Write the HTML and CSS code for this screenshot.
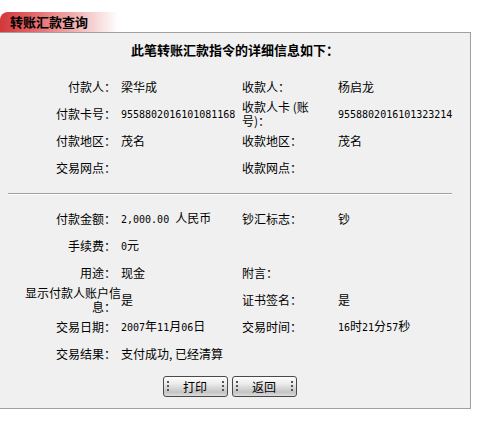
FILE: index.html
```
<!DOCTYPE html>
<html lang="zh-CN">
  <head>
    <meta charset="UTF-8" />
    <title>转账汇款查询</title>
    <link rel="stylesheet" href="styles.css">
  </head>
  <body>
    <div class="tab">转账汇款查询</div>

    <div class="panel">
      <h3 class="title">此笔转账汇款指令的详细信息如下：</h3>

      <div class="info">
        <div class="lbl">付款人：</div>
        <div class="val">梁华成</div>
        <div class="lbl2">收款人：</div>
        <div class="val">杨启龙</div>

        <div class="lbl">付款卡号：</div>
        <div class="val"><span class="num">9558802016101081168</span></div>
        <div class="lbl2">收款人卡 (账<br />号)：</div>
        <div class="val"><span class="num">9558802016101323214</span></div>

        <div class="lbl">付款地区：</div>
        <div class="val">茂名</div>
        <div class="lbl2">收款地区：</div>
        <div class="val">茂名</div>

        <div class="lbl">交易网点：</div>
        <div class="val"></div>
        <div class="lbl2">收款网点：</div>
        <div class="val"></div>
      </div>

      <hr class="sep" />

      <div class="info">
        <div class="lbl">付款金额：</div>
        <div class="val"><span class="num">2,000.00 </span>人民币</div>
        <div class="lbl2">钞汇标志：</div>
        <div class="val">钞</div>

        <div class="lbl">手续费：</div>
        <div class="val"><span class="num">0</span>元</div>
        <div class="lbl2"></div>
        <div class="val"></div>

        <div class="lbl">用途：</div>
        <div class="val">现金</div>
        <div class="lbl2">附言：</div>
        <div class="val"></div>

        <div class="lbl">显示付款人账户信<br />息：</div>
        <div class="val">是</div>
        <div class="lbl2">证书签名：</div>
        <div class="val">是</div>

        <div class="lbl">交易日期：</div>
        <div class="val"><span class="num">2007</span>年<span class="num">11</span>月<span class="num">06</span>日</div>
        <div class="lbl2">交易时间：</div>
        <div class="val"><span class="num">16</span>时<span class="num">21</span>分<span class="num">57</span>秒</div>

        <div class="lbl">交易结果：</div>
        <div class="val wide">支付成功, 已经清算</div>
      </div>

      <div class="btns">
        <button class="btn" onclick="window.print()">打印</button>
        <button class="btn" onclick="history.back()">返回</button>
      </div>
    </div>
  </body>
</html>
```

FILE: styles.css
```
body {
  margin: 0;
  background-color: #ffffff;
  font-family: "Noto Sans CJK SC", sans-serif;
  font-size: 12px;
  line-height: 14px;
  color: #000;
}
.tab {
  margin-top: 12px;
  width: 108px;
  height: 20px;
  line-height: 20px;
  padding-left: 10px;
  font-size: 13px;
  font-weight: bold;
  border-top-left-radius: 8px;
  background: linear-gradient(to right, #d2363a 0%, #e46a6c 30%, #f2b4b4 65%, #ffffff 100%);
}
.panel {
  width: 470px;
  background-color: #f0f0f0;
  border-top: 1px solid #a0a0a0;
  border-right: 1px solid #a0a0a0;
  border-bottom: 1px solid #a0a0a0;
  padding: 9px 0 11px 0;
}
.title {
  margin: 0 0 15px 0;
  text-align: center;
  font-size: 13px;
  line-height: 16px;
  font-weight: bold;
}
.info {
  display: grid;
  grid-template-columns: 96px 121px 96px 1fr;
  grid-auto-rows: 27px;
  align-items: center;
  padding-left: 25px;
}
.lbl {
  text-align: right;
  padding-right: 5px;
  white-space: nowrap;
}
.lbl2 {
  text-align: left;
  white-space: nowrap;
}
.val {
  white-space: pre;
}
.wide {
  grid-column: 2 / 5;
}
.num {
  font-family: "DejaVu Sans Mono", monospace;
  font-size: 10px;
}
.sep {
  border: 0;
  border-top: 1px solid #a0a0a0;
  border-bottom: 1px solid #ffffff;
  margin: 12px 18px 10px 8px;
}
.btns {
  display: flex;
  justify-content: center;
  gap: 4px;
  margin-top: 9px;
  padding-right: 11px;
}
.btn {
  position: relative;
  width: 65px;
  height: 21px;
  padding: 0;
  font-family: "Noto Sans CJK SC", sans-serif;
  font-size: 12px;
  color: #000;
  border: 1px solid #4a4a4a;
  border-radius: 3px;
  background: linear-gradient(#fdfdfd 0%, #ececec 35%, #c4c4c4 80%, #dcdcdc 100%);
  cursor: pointer;
}
/* grip dots on both ends of the button */
.btn::before,
.btn::after {
  content: "";
  position: absolute;
  top: 3px;
  width: 2px;
  height: 13px;
  background-image: radial-gradient(circle, #555 0.9px, transparent 1.2px);
  background-size: 2px 4px;
}
.btn::before {
  left: 3px;
}
.btn::after {
  right: 3px;
}
```
